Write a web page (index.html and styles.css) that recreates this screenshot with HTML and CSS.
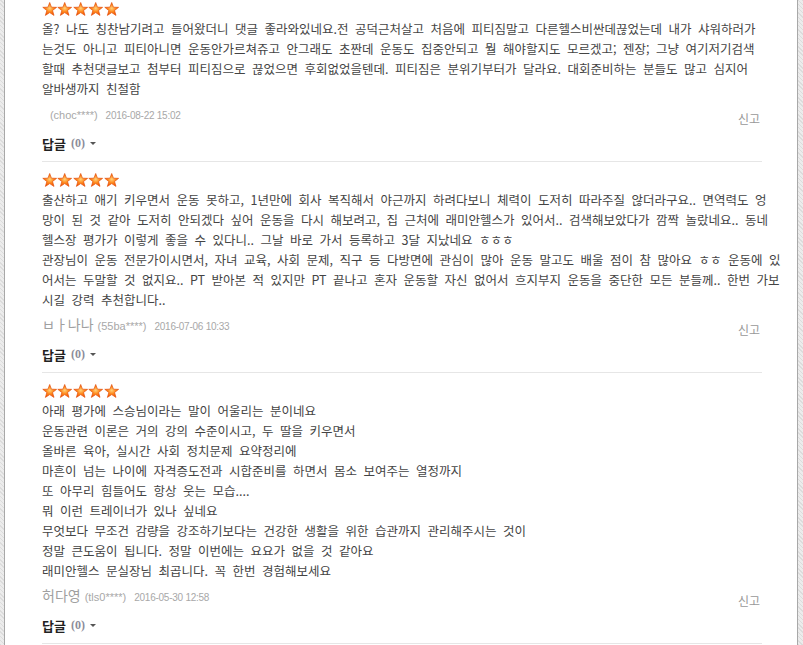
FILE: index.html
```html
<!DOCTYPE html>
<html lang="ko">
<head>
<meta charset="utf-8">
<title>평가</title>
<link rel="stylesheet" href="styles.css">
</head>
<body>
<svg class="defs" width="0" height="0" aria-hidden="true">
  <defs>
    <radialGradient id="starFill" cx="50%" cy="45%" r="60%">
      <stop offset="0" stop-color="#ffd27a"/>
      <stop offset="0.45" stop-color="#ff8a1e"/>
      <stop offset="1" stop-color="#f24a00"/>
    </radialGradient>
    <symbol id="star" viewBox="0 0 15 14">
      <path d="M7.5 0.5 L9.26 5.17 L14.4 5.35 L10.35 8.53 L11.8 13.4 L7.5 10.6 L3.2 13.4 L4.65 8.53 L0.6 5.35 L5.74 5.17 Z" fill="url(#starFill)" stroke="#e2500c" stroke-width="0.7" stroke-linejoin="round"/>
    </symbol>
  </defs>
</svg>
<div class="page">
  <ul class="reviews">
    <li class="review">
      <div class="stars">
        <svg class="star"><use href="#star"/></svg><svg class="star"><use href="#star"/></svg><svg class="star"><use href="#star"/></svg><svg class="star"><use href="#star"/></svg><svg class="star"><use href="#star"/></svg>
      </div>
      <p class="text">올? 나도 칭찬남기려고 들어왔더니 댓글 좋라와있네요.전 공덕근처살고 처음에 피티짐말고 다른헬스비싼데끊었는데 내가 샤워하러가<br>는것도 아니고 피티아니면 운동안가르쳐쥬고 안그래도 초짠데 운동도 집중안되고 뭘 해야할지도 모르겠고; 젠장; 그냥 여기저기검색<br>할때 추천댓글보고 첨부터 피티짐으로 끊었으면 후회없었을텐데. 피티짐은 분위기부터가 달라요. 대회준비하는 분들도 많고 심지어<br>알바생까지 친절함</p>
      <div class="meta">
        <span class="author"><span class="name">&nbsp;</span><span class="uid">(choc****)</span><span class="date">2016-08-22 15:02</span></span>
        <a class="report">신고</a>
      </div>
      <div class="reply"><span class="reply-label">답글</span><span class="count">(0)</span><span class="caret"></span></div>
    </li>
    <li class="review">
      <div class="stars">
        <svg class="star"><use href="#star"/></svg><svg class="star"><use href="#star"/></svg><svg class="star"><use href="#star"/></svg><svg class="star"><use href="#star"/></svg><svg class="star"><use href="#star"/></svg>
      </div>
      <p class="text">출산하고 애기 키우면서 운동 못하고, 1년만에 회사 복직해서 야근까지 하려다보니 체력이 도저히 따라주질 않더라구요.. 면역력도 엉<br>망이 된 것 같아 도저히 안되겠다 싶어 운동을 다시 해보려고, 집 근처에 래미안헬스가 있어서.. 검색해보았다가 깜짝 놀랐네요.. 동네<br>헬스장 평가가 이렇게 좋을 수 있다니.. 그날 바로 가서 등록하고 3달 지났네요 ㅎㅎㅎ<br>관장님이 운동 전문가이시면서, 자녀 교육, 사회 문제, 직구 등 다방면에 관심이 많아 운동 말고도 배울 점이 참 많아요 ㅎㅎ 운동에 있<br>어서는 두말할 것 없지요.. PT 받아본 적 있지만 PT 끝나고 혼자 운동할 자신 없어서 흐지부지 운동을 중단한 모든 분들께.. 한번 가보<br>시길 강력 추천합니다..</p>
      <div class="meta">
        <span class="author"><span class="name">ㅂㅏ나나</span><span class="uid">(55ba****)</span><span class="date">2016-07-06 10:33</span></span>
        <a class="report">신고</a>
      </div>
      <div class="reply"><span class="reply-label">답글</span><span class="count">(0)</span><span class="caret"></span></div>
    </li>
    <li class="review">
      <div class="stars">
        <svg class="star"><use href="#star"/></svg><svg class="star"><use href="#star"/></svg><svg class="star"><use href="#star"/></svg><svg class="star"><use href="#star"/></svg><svg class="star"><use href="#star"/></svg>
      </div>
      <p class="text">아래 평가에 스승님이라는 말이 어울리는 분이네요<br>운동관련 이론은 거의 강의 수준이시고, 두 딸을 키우면서<br>올바른 육아, 실시간 사회 정치문제 요약정리에<br>마흔이 넘는 나이에 자격증도전과 시합준비를 하면서 몸소 보여주는 열정까지<br>또 아무리 힘들어도 항상 웃는 모습....<br>뭐 이런 트레이너가 있나 싶네요<br>무엇보다 무조건 감량을 강조하기보다는 건강한 생활을 위한 습관까지 관리해주시는 것이<br>정말 큰도움이 됩니다. 정말 이번에는 요요가 없을 것 같아요<br>래미안헬스 문실장님 최곱니다. 꼭 한번 경험해보세요</p>
      <div class="meta">
        <span class="author"><span class="name">허다영</span><span class="uid">(tls0****)</span><span class="date">2016-05-30 12:58</span></span>
        <a class="report">신고</a>
      </div>
      <div class="reply"><span class="reply-label">답글</span><span class="count">(0)</span><span class="caret"></span></div>
    </li>
  </ul>
</div>
</body>
</html>
```

FILE: styles.css
```css
html, body {
  margin: 0;
  padding: 0;
  height: 100%;
}

body {
  background-color: #e4e4e4;
  background-image: repeating-linear-gradient(45deg, #dcdcdc 0 1px, #ececec 1px 3px);
  font-family: "Noto Sans CJK KR", "Noto Sans", sans-serif;
  color: #444;
  overflow: hidden;
}

.defs {
  position: absolute;
  width: 0;
  height: 0;
}

.page {
  margin: 0 5px 0 4px;
  min-height: 100%;
  background: #fff;
  border-left: 1px solid #a8a8a8;
  border-right: 1px solid #a8a8a8;
  padding: 0 35px 0 37px;
  overflow: hidden;
}

.reviews {
  list-style: none;
  margin: -9px 0 0;
  padding: 0;
}

.review {
  padding-top: 8px;
  border-bottom: 1px solid #e6e6e6;
}

.stars {
  height: 20px;
  display: flex;
  align-items: center;
}

.star {
  width: 15.4px;
  height: 14px;
  display: block;
}

.text {
  margin: 0;
  font-size: 12.5px;
  line-height: 20px;
  word-spacing: 3px;
  white-space: nowrap;
  color: #444;
}

.meta {
  display: flex;
  justify-content: space-between;
  align-items: flex-start;
  margin-top: 4px;
}

.author {
  line-height: 20px;
  display: flex;
  align-items: baseline;
}

.name {
  font-size: 14px;
  color: #a0a0a0;
  margin-right: 4px;
}

.uid {
  font-family: "Liberation Sans", sans-serif;
  font-size: 11px;
  color: #a8a8a8;
}

.date {
  font-family: "Liberation Sans", sans-serif;
  font-size: 10px;
  color: #a8a8a8;
  margin-left: 8px;
  letter-spacing: -0.25px;
}

.report {
  margin-top: 6px;
  font-size: 12px;
  line-height: 20px;
  color: #999;
  padding-right: 2px;
}

.reply {
  margin: 4px 0 8px;
  height: 20px;
  display: flex;
  align-items: center;
}

.reply-label {
  font-size: 13px;
  font-weight: bold;
  color: #222;
}

.count {
  font-family: "Liberation Serif", serif;
  font-size: 12px;
  font-weight: bold;
  color: #8c8c9a;
  margin-left: 5px;
}

.caret {
  width: 0;
  height: 0;
  border-left: 3px solid transparent;
  border-right: 3px solid transparent;
  border-top: 3px solid #555;
  margin-left: 5px;
  margin-top: 1px;
}
```
